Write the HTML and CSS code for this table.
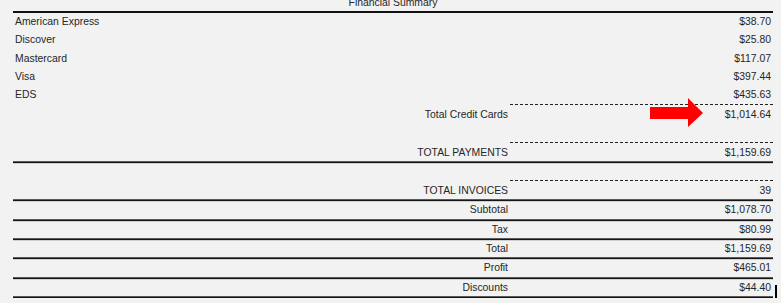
FILE: index.html
```html
<!DOCTYPE html>
<html>
<head>
<meta charset="utf-8">
<link rel="stylesheet" href="styles.css">
</head>
<body>
<div class="summary">
  <div class="title">Financial Summary</div>
  <div class="rule-top"></div>
  <div class="row card"><span class="label">American Express</span><span class="value">$38.70</span></div>
  <div class="row card"><span class="label">Discover</span><span class="value">$25.80</span></div>
  <div class="row card"><span class="label">Mastercard</span><span class="value">$117.07</span></div>
  <div class="row card"><span class="label">Visa</span><span class="value">$397.44</span></div>
  <div class="row card"><span class="label">EDS</span><span class="value">$435.63</span></div>
  <div class="row total"><span class="label right">Total Credit Cards</span><span class="value dashed">$1,014.64</span></div>
  <div class="spacer s1"></div>
  <div class="row total"><span class="label right">TOTAL PAYMENTS</span><span class="value dashed">$1,159.69</span></div>
  <div class="rule"></div>
  <div class="spacer s2"></div>
  <div class="row total"><span class="label right">TOTAL INVOICES</span><span class="value dashed">39</span></div>
  <div class="rule"></div>
  <div class="row sum"><span class="label right">Subtotal</span><span class="value">$1,078.70</span></div>
  <div class="rule"></div>
  <div class="row sum"><span class="label right">Tax</span><span class="value">$80.99</span></div>
  <div class="rule"></div>
  <div class="row sum"><span class="label right">Total</span><span class="value">$1,159.69</span></div>
  <div class="rule"></div>
  <div class="row sum"><span class="label right">Profit</span><span class="value">$465.01</span></div>
  <div class="rule"></div>
  <div class="row sum"><span class="label right">Discounts</span><span class="value">$44.40</span></div>
  <div class="rule"></div>
  <svg class="arrow" width="55" height="30" viewBox="0 0 55 30"><polygon points="0,9 38,9 38,0 53,15 38,29 38,21 0,21" fill="#ff0000"/></svg>
  <div class="cursor"></div>
</div>
</body>
</html>
```
FILE: styles.css
```css
html, body {
  margin: 0;
  padding: 0;
  background: #f2f2f2;
}
body {
  font-family: "Liberation Sans", Arial, sans-serif;
  font-size: 10.4px;
  color: #262626;
  overflow: hidden;
}
.summary {
  position: relative;
  width: 760px;
  margin: -5px 0 0 13px;
}
.title {
  height: 16px;
  line-height: 16px;
  text-align: center;
}
.rule-top {
  height: 2px;
  background: #111;
}
.row {
  display: grid;
  grid-template-columns: 497px 263px;
}
.row .label {
  padding: 0 2px;
}
.row .label.right {
  text-align: right;
}
.row .value {
  text-align: right;
  padding: 0 2px;
}
.card {
  height: 18.25px;
  line-height: 18.25px;
}
.total {
  height: 19px;
  line-height: 19px;
}
.total .label {
  padding-top: 1px;
}
.total .value.dashed {
  border-top: 1px dashed #222;
}
.sum {
  height: 17.35px;
  line-height: 17.35px;
}
.spacer.s1 { height: 19px; }
.spacer.s2 { height: 17px; }
.rule {
  height: 2px;
  background: linear-gradient(#5a5a5a 50%, #161616 50%);
  box-shadow: 0 1px 0 #cfcfcf;
}
.arrow {
  position: absolute;
  left: 637px;
  top: 103px;
}
.cursor {
  position: absolute;
  left: 762px;
  top: 290px;
  width: 2px;
  height: 16px;
  background: #000;
}
```
